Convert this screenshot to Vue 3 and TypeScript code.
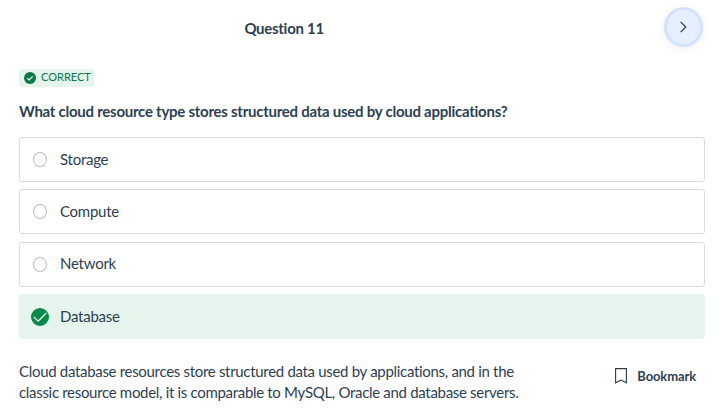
<script setup lang="ts">
import { ref } from 'vue'

interface Option { id: string; label: string }

const options: Option[] = [
  { id: 'storage', label: 'Storage' },
  { id: 'compute', label: 'Compute' },
  { id: 'network', label: 'Network' },
  { id: 'database', label: 'Database' },
]
const answer = ref('database')
</script>

<template>
  <main class="quiz">
    <header class="header">
      <h1 class="title">Question 11</h1>
      <button class="next" aria-label="Next question">
        <svg width="12" height="14" viewBox="0 0 12 14"><path d="M2.6 1.8 7.8 7 2.6 12.2" /></svg>
      </button>
    </header>
    <div class="status">
      <svg width="12" height="12" viewBox="0 0 12 12"><circle cx="6" cy="6" r="6" fill="#037b45" /><path d="m3.3 6.2 1.8 1.7 3.6-3.6" fill="none" stroke="#fff" stroke-width="1.2" /></svg>
      <span>CORRECT</span>
    </div>
    <h2 class="question">What cloud resource type stores structured data used by cloud applications?</h2>
    <ul class="options">
      <li v-for="o in options" :key="o.id" class="option" :class="{ correct: o.id === answer }">
        <svg v-if="o.id === answer" class="mark" width="18" height="18" viewBox="0 0 18 18"><circle cx="9" cy="9" r="9" fill="#088a4b" /><path d="m2.8 8.8 4.4 4.4 8-8.2" fill="none" stroke="#fff" stroke-width="1.2" /></svg>
        <span v-else class="radio"></span>
        <span>{{ o.label }}</span>
      </li>
    </ul>
    <footer class="footer">
      <p class="explanation">Cloud database resources store structured data used by applications, and in the classic resource model, it is comparable to MySQL, Oracle and database servers.</p>
      <button class="bookmark">
        <svg width="12" height="16" viewBox="0 0 12 16"><path d="M.6.6h10.8v14.2L6 12.1.6 14.8Z" /></svg>
        <span>Bookmark</span>
      </button>
    </footer>
  </main>
</template>

<style>
body { margin: 0; background: #fff; overflow: hidden; }
</style>

<style scoped>
.quiz { box-sizing: border-box; width: 720px; height: 415px; padding: 7px 15px 0 19px; font-family: Lato, sans-serif; color: #2d3f52; overflow: hidden; }
button { font: inherit; color: inherit; border: 0; padding: 0; background: none; }
.header { display: flex; height: 40px; justify-content: space-between; }
.title { margin: 11px 0 0 225.4px; font-size: 15px; line-height: 20px; font-weight: 700; letter-spacing: -.29px; }
.next { box-sizing: border-box; width: 39px; height: 40px; margin-right: 2px; border: 3px solid #d3e3fd; border-radius: 50%; background: #e6effd; display: flex; align-items: center; justify-content: center; box-shadow: 0 2px 9px rgb(0 0 0 / 7%); }
.next path { fill: none; stroke: #2a3b4d; stroke-width: 1.2; }
.status { box-sizing: border-box; width: 75px; height: 18px; margin-top: 22px; padding-left: 5px; display: flex; align-items: center; gap: 5px; border-radius: 3px; background: #e5f4ed; color: #08784a; font-size: 11px; }
.status span { line-height: 14px; padding-bottom: 2px; }
.question { margin: 14px 0 0; font-size: 15px; line-height: 20px; font-weight: 700; letter-spacing: -.257px; white-space: nowrap; }
.options { list-style: none; margin: 16px 0 0; padding: 0; display: grid; gap: 7.33px; width: 686px; }
.option { box-sizing: border-box; height: 45px; padding-left: 13px; display: flex; align-items: center; border: 1px solid #d8dbdf; border-radius: 3px; font-size: 15px; line-height: 18px; letter-spacing: -.25px; }
.option > span:last-child { padding-bottom: 1.4px; }
.option.correct { border-color: #e5f4ed; background: #e5f4ed; padding-left: 11px; }
.option.correct > span:last-child { padding-bottom: 0; }
.radio { box-sizing: border-box; width: 14px; height: 15px; border: 1px solid #b7bec8; border-radius: 50%; margin-right: 13px; }
.mark { margin: 1px 11px 0 0; }
.footer { display: flex; justify-content: space-between; margin-top: 22px; }
.explanation { margin: 0; width: 515px; font-size: 15px; line-height: 21px; letter-spacing: -.31px; }
.bookmark { display: flex; height: 20px; margin: 5px 9px 0 0; align-items: center; gap: 10px; font-size: 13px; font-weight: 700; letter-spacing: -.12px; }
.bookmark svg { margin-top: 1px; }
.bookmark path { fill: none; stroke: #2a3b4d; stroke-width: 1.1; }
</style>
